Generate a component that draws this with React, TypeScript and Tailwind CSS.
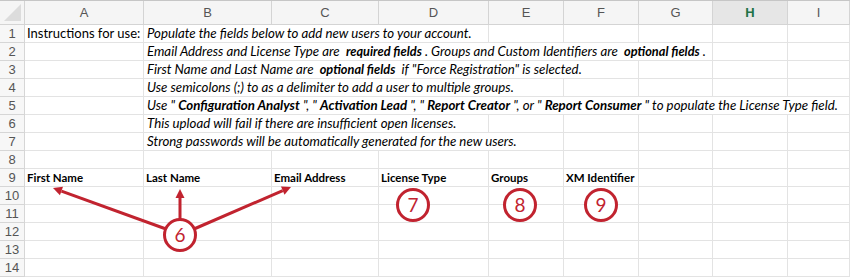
import React from "react";

const cols = ["A", "B", "C", "D", "E", "F", "G", "H", "I"];

const RED = "#c1232f";

// bold parts inside the italic instruction lines
const B = ({ children, big }: { children: React.ReactNode; big?: boolean }) => (
  <span className={"font-bold " + (big ? "text-[13.25px]" : "text-[12.75px]")}>{children}</span>
);

// rows 1-7: text in column B and how many columns it spills over
const notes: { span: number; content: React.ReactNode }[] = [
  { span: 3, content: "Populate the fields below to add new users to your account." },
  {
    span: 6,
    content: (
      <>
        {"Email Address and License Type are  "}
        <B>required fields</B>
        {" . Groups and Custom Identifiers are  "}
        <B>optional fields</B>
        {" ."}
      </>
    ),
  },
  {
    span: 5,
    content: (
      <>
        {"First Name and Last Name are  "}
        <B>optional fields</B>
        {'  if "Force Registration" is selected.'}
      </>
    ),
  },
  { span: 4, content: "Use semicolons (;) to as a delimiter to add a user to multiple groups." },
  {
    span: 8,
    content: (
      <>
        {'Use " '}
        <B big>Configuration Analyst</B>
        {' ", " '}
        <B big>Activation Lead</B>
        {' ", " '}
        <B big>Report Creator</B>
        {' ", or " '}
        <B big>Report Consumer</B>
        {' " to populate the License Type field.'}
      </>
    ),
  },
  { span: 3, content: "This upload will fail if there are insufficient open licenses." },
  { span: 4, content: "Strong passwords will be automatically generated for the new users." },
];

const headers = ["First Name", "Last Name", "Email Address", "License Type", "Groups", "XM Identifier"];

function RowNum({ n }: { n: number }) {
  return (
    <div className="h-[18px] border-b border-r border-[#d6d6d6] bg-[#f7f7f7] flex items-center justify-center text-[13px] text-[#555] font-['Liberation_Sans',sans-serif]">
      {n}
    </div>
  );
}

function Cell({ children, span = 1, className = "" }: { children?: React.ReactNode; span?: number; className?: string }) {
  return (
    <div
      className={"h-[18px] border-b border-r border-[#e3e3e3] flex items-center whitespace-pre " + className}
      style={{ gridColumn: `span ${span}` }}
    >
      {children}
    </div>
  );
}

function Circle({ cx, cy, n }: { cx: number; cy: number; n: number }) {
  return (
    <g>
      <circle cx={cx} cy={cy} r={15.5} fill="white" stroke={RED} strokeWidth={3} />
      <text x={cx} y={cy + 6.5} textAnchor="middle" fontSize={19} fill={RED} fontFamily="Lato, sans-serif">
        {n}
      </text>
    </g>
  );
}

function Arrow({ x1, y1, x2, y2 }: { x1: number; y1: number; x2: number; y2: number }) {
  const a = Math.atan2(y2 - y1, x2 - x1);
  const len = 9;
  const wid = 4.5;
  const bx = x2 - Math.cos(a) * len;
  const by = y2 - Math.sin(a) * len;
  const px = -Math.sin(a) * wid;
  const py = Math.cos(a) * wid;
  return (
    <g>
      <line x1={x1} y1={y1} x2={bx} y2={by} stroke={RED} strokeWidth={3} />
      <polygon points={`${x2},${y2} ${bx + px},${by + py} ${bx - px},${by - py}`} fill={RED} />
    </g>
  );
}

export default function App() {
  const grid = "grid grid-cols-[25px_119px_128px_107px_110px_75px_75px_74px_75px_62px]";
  return (
    <div className="relative w-[850px] h-[277px] overflow-hidden bg-white font-['Lato',sans-serif] text-[13px] text-black">
      {/* column header */}
      <div className={grid + " h-[25px] border-t border-[#c6c6c6] bg-[#f5f5f5]"}>
        <div className="border-r border-b border-[#d4d4d4] relative">
          <div className="absolute right-[3px] bottom-[3px] w-0 h-0 border-l-[17px] border-l-transparent border-b-[17px] border-b-[#dcdcdc]" />
        </div>
        {cols.map((c) => (
          <div
            key={c}
            className={
              "border-r border-b border-[#d4d4d4] flex items-center justify-center text-[13px] font-['Liberation_Sans',sans-serif] " +
              (c === "H" ? "bg-[#e6e6e6] text-[#217346] font-semibold" : "text-[#555]")
            }
          >
            {c}
          </div>
        ))}
      </div>

      {/* rows 1-7: instructions */}
      {notes.map((row, i) => (
        <div key={i} className={grid}>
          <RowNum n={i + 1} />
          <Cell className="pl-[2px]">{i === 0 ? "Instructions for use:" : ""}</Cell>
          <Cell span={row.span} className="italic pl-[3px] text-[13.25px]">
            {row.content}
          </Cell>
          {Array.from({ length: 8 - row.span }).map((_, k) => (
            <Cell key={k} />
          ))}
        </div>
      ))}

      {/* row 8 */}
      <div className={grid}>
        <RowNum n={8} />
        {cols.map((c) => (
          <Cell key={c} />
        ))}
      </div>

      {/* row 9: field headers */}
      <div className={grid}>
        <RowNum n={9} />
        {cols.map((c, k) => (
          <Cell key={c} className="font-bold pl-[2px] text-[11.5px]">
            {headers[k] ?? ""}
          </Cell>
        ))}
      </div>

      {/* rows 10-14 */}
      {[10, 11, 12, 13, 14].map((n) => (
        <div key={n} className={grid}>
          <RowNum n={n} />
          {cols.map((c) => (
            <Cell key={c} />
          ))}
        </div>
      ))}

      {/* annotation callouts */}
      <svg className="absolute inset-0 pointer-events-none" width={850} height={277}>
        <Arrow x1={166} y1={229} x2={53} y2={188} />
        <Arrow x1={180} y1={220} x2={180} y2={189} />
        <Arrow x1={194} y1={229} x2={291} y2={187} />
        <Circle cx={180} cy={235} n={6} />
        <Circle cx={413} cy={205} n={7} />
        <Circle cx={520} cy={205} n={8} />
        <Circle cx={601} cy={205} n={9} />
      </svg>
    </div>
  );
}
